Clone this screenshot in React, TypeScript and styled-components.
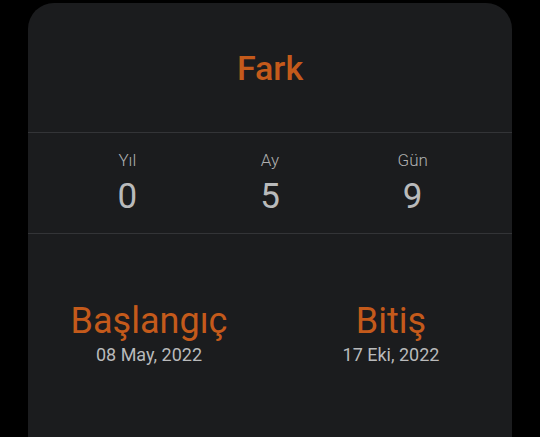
import React from 'react'
import styled, { createGlobalStyle } from 'styled-components'

const Global = createGlobalStyle`
  html, body {
    margin: 0;
    padding: 0;
    background: #000;
    height: 100%;
    overflow: hidden;
  }
  #root {
    height: 100%;
  }
`

const Screen = styled.div`
  height: 437px;
  padding: 3px 28px 0 28px;
  box-sizing: border-box;
  background: #000;
  font-family: Roboto, 'Noto Sans', sans-serif;
`

const Card = styled.div`
  background: #1b1c1e;
  border-radius: 26px 26px 0 0;
  height: 434px;
  display: flex;
  flex-direction: column;
`

const Header = styled.div`
  height: 129px;
  display: flex;
  align-items: center;
  justify-content: center;
  border-bottom: 1px solid #333437;
`

const Title = styled.h1`
  margin: 0;
  font-size: 34px;
  font-weight: 500;
  color: #c45a1b;
`

const Stats = styled.div`
  height: 100px;
  display: grid;
  grid-template-columns: repeat(3, 1fr);
  padding: 0 28px;
  border-bottom: 1px solid #333437;
`

const Stat = styled.div`
  display: flex;
  flex-direction: column;
  align-items: center;
  padding-top: 16px;
  gap: 6px;
`

const StatLabel = styled.span`
  font-size: 17px;
  font-weight: 300;
  color: #aeafb0;
  line-height: 22px;
`

const StatValue = styled.span`
  font-size: 35px;
  color: #b9babb;
  line-height: 40px;
`

const Dates = styled.div`
  display: grid;
  grid-template-columns: 1fr 1fr;
  padding-top: 66px;
`

const DateCol = styled.div`
  display: flex;
  flex-direction: column;
  align-items: center;
  gap: 2px;
`

const DateTitle = styled.span`
  font-size: 36px;
  color: #c45a1b;
  line-height: 42px;
`

const DateValue = styled.span`
  font-size: 18px;
  color: #b9babb;
  line-height: 22px;
`

const stats = [
  { label: 'Yıl', value: 0 },
  { label: 'Ay', value: 5 },
  { label: 'Gün', value: 9 },
]

const dates = [
  { title: 'Başlangıç', value: '08 May, 2022' },
  { title: 'Bitiş', value: '17 Eki, 2022' },
]

export default function App() {
  return (
    <>
      <Global />
      <Screen>
        <Card>
          <Header>
            <Title>Fark</Title>
          </Header>
          <Stats>
            {stats.map((s) => (
              <Stat key={s.label}>
                <StatLabel>{s.label}</StatLabel>
                <StatValue>{s.value}</StatValue>
              </Stat>
            ))}
          </Stats>
          <Dates>
            {dates.map((d) => (
              <DateCol key={d.title}>
                <DateTitle>{d.title}</DateTitle>
                <DateValue>{d.value}</DateValue>
              </DateCol>
            ))}
          </Dates>
        </Card>
      </Screen>
    </>
  )
}
